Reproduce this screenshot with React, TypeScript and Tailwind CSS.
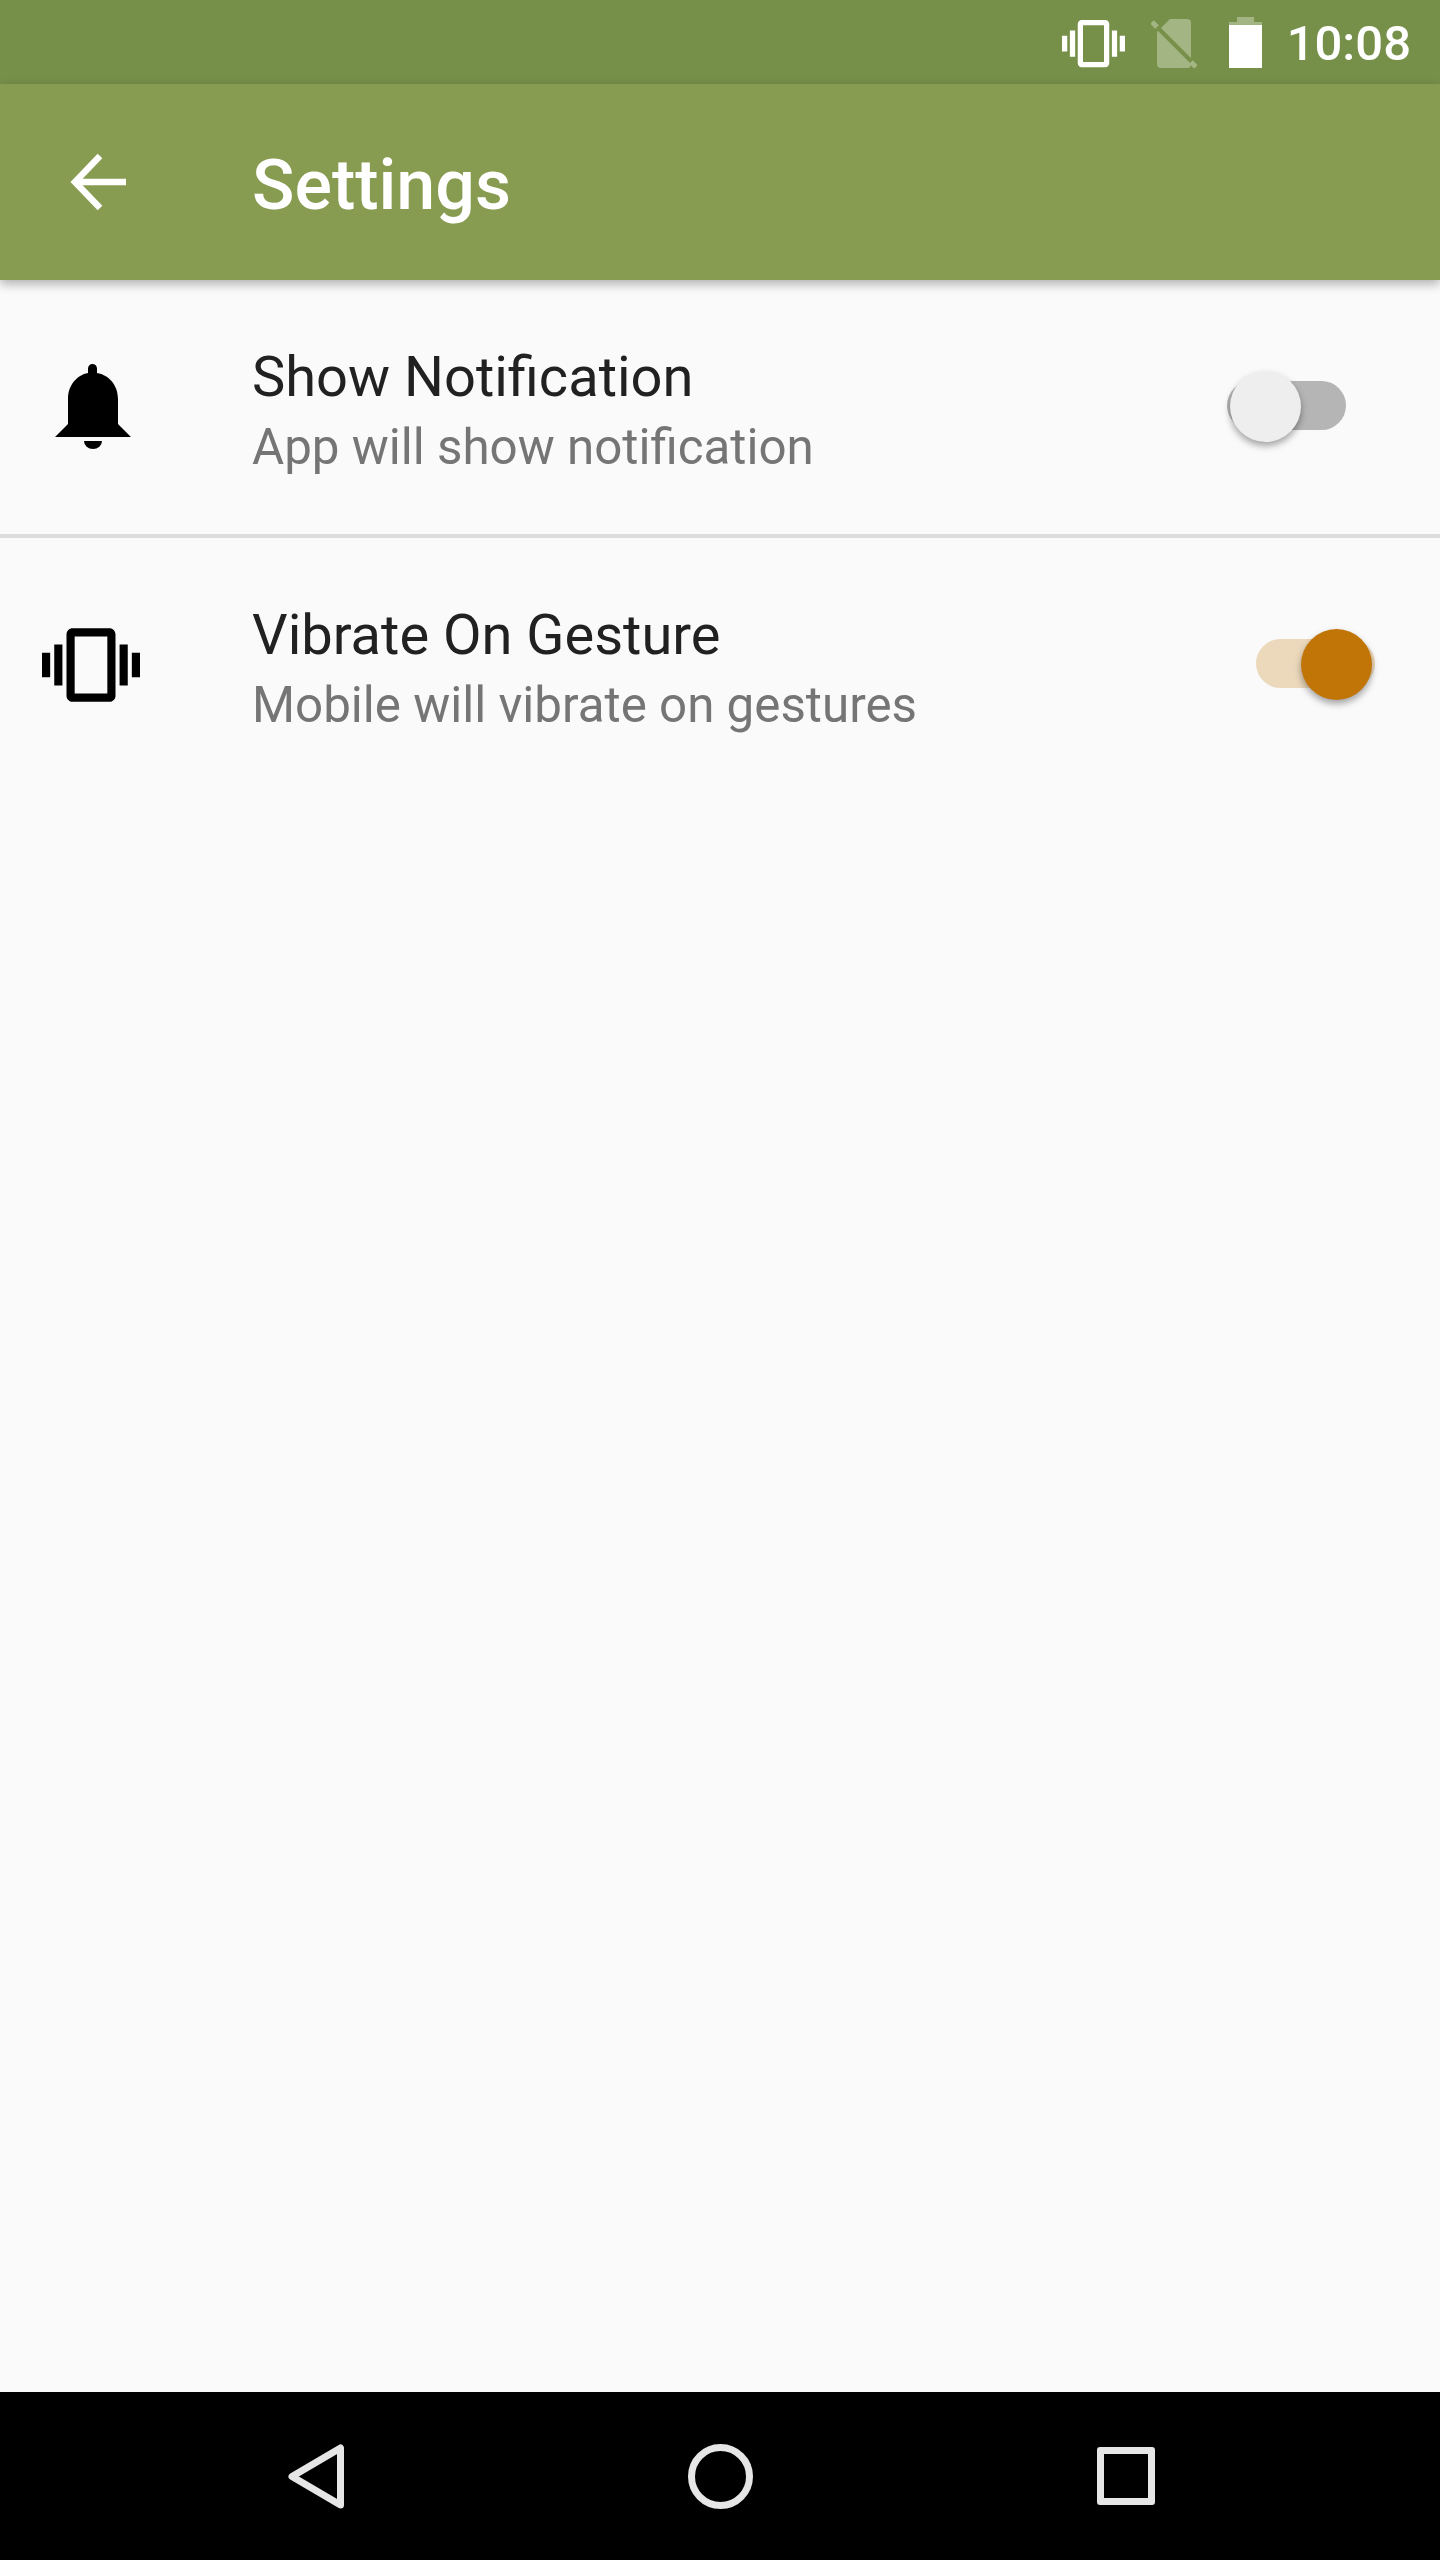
const font = { fontFamily: "Roboto, sans-serif" };

function VibrationIcon({ className }: { className: string }) {
  return (
    <svg viewBox="0 0 24 24" className={className} fill="currentColor">
      <path d="M0 15h2V9H0v6zm3 2h2V7H3v10zm19-8v6h2V9h-2zm-3 8h2V7h-2v10zM16.5 3h-9C6.67 3 6 3.67 6 4.5v15c0 .83.67 1.5 1.5 1.5h9c.83 0 1.5-.67 1.5-1.5v-15c0-.83-.67-1.5-1.5-1.5zM16 19H8V5h8v14z" />
    </svg>
  );
}

function NoSimIcon() {
  return (
    <svg viewBox="0 0 46 50" className="w-[46px] h-[50px] mr-[32px] mt-[1px]">
      <path
        d="M19 1h17a4 4 0 0 1 4 4v41a4 4 0 0 1-4 4H10a4 4 0 0 1-4-4V14z"
        fill="#a3b583"
      />
      <path d="M4 7 43 46" stroke="#76904a" strokeWidth="4" fill="none" />
      <path d="M1 4 6 9" stroke="#a3b583" strokeWidth="5" fill="none" />
      <path d="M40 44l5 5" stroke="#a3b583" strokeWidth="5" fill="none" />
    </svg>
  );
}

function BatteryIcon() {
  return (
    <div className="flex flex-col items-center w-[33px] mr-[25px]">
      <div className="w-[17px] h-[5px] bg-[#a3b583]" />
      <div className="w-[33px] h-[3px] bg-[#a3b583]" />
      <div className="w-[33px] h-[43px] bg-white" />
    </div>
  );
}

function BellIcon() {
  return (
    <svg viewBox="0 0 76 85" className="w-[76px] h-[85px]" fill="#000">
      <path d="M33 9V4.5a4.5 4.5 0 0 1 9 0V9c12 2 21 12 21 26v25l13 13H0l13-13V35c0-14 9-24 20-26z" />
      <path d="M29 77h18a9 8 0 0 1-18 0z" />
    </svg>
  );
}

function Toggle({ on }: { on: boolean }) {
  return (
    <div className={on ? "relative w-[119px] h-[49px] mr-[65px] mb-[4px]" : "relative w-[119px] h-[49px] mr-[94px] mb-[4px]"}>
      <div className={on ? "h-full rounded-full bg-[#ecd9bc]" : "h-full rounded-full bg-[#b5b5b5]"} />
      {on ? (
        <div className="absolute left-[45px] top-[-10px] w-[71px] h-[71px] rounded-full bg-[#c17507] shadow-[0_4px_7px_rgba(0,0,0,0.35)]" />
      ) : (
        <div className="absolute left-[3px] top-[-10px] w-[71px] h-[71px] rounded-full bg-[#eeeeee] shadow-[0_4px_7px_rgba(0,0,0,0.35)]" />
      )}
    </div>
  );
}

export default function App() {
  return (
    <div className="w-[1440px] h-[2560px] flex flex-col bg-[#fafafa] overflow-hidden" style={font}>
      {/* Status bar */}
      <div className="h-[84px] flex-shrink-0 bg-[#76904a] flex items-center justify-end text-white">
        <VibrationIcon className="w-[63px] h-[63px] mr-[26px] mt-[2px]" />
        <NoSimIcon />
        <BatteryIcon />
        <span className="text-[49px] leading-[84px] font-medium mr-[29px] pt-[3px]">10:08</span>
      </div>

      {/* Toolbar */}
      <div className="h-[196px] flex-shrink-0 bg-[#889c51] flex items-center shadow-[0_4px_10px_rgba(0,0,0,0.3)] relative">
        <svg viewBox="0 0 56 60" className="w-[56px] h-[60px] ml-[70px]" fill="none" stroke="#fff" strokeWidth="6.5">
          <path d="M56 30H5M30 4 5 30l25 26" />
        </svg>
        <span className="ml-[126px] pt-[6px] text-[70px] leading-[84px] font-medium text-white">Settings</span>
      </div>

      {/* Settings list */}
      <div className="flex-1">
        <div className="h-[258px] flex items-center border-b-[4px] border-[#dcdcdc]">
          <div className="w-[252px] pl-[55px] flex-shrink-0 mb-[2px]">
            <BellIcon />
          </div>
          <div className="flex-1 pt-[9px]">
            <div className="text-[56px] leading-[70px] text-[#212121]">Show Notification</div>
            <div className="text-[49.3px] leading-[70px] text-[#757575]">App will show notification</div>
          </div>
          <Toggle on={false} />
        </div>
        <div className="h-[254px] flex items-center">
          <div className="w-[252px] pl-[42px] flex-shrink-0">
            <VibrationIcon className="w-[98px] h-[98px] text-black" />
          </div>
          <div className="flex-1 pt-[9px]">
            <div className="text-[56px] leading-[70px] text-[#212121]">Vibrate On Gesture</div>
            <div className="text-[49.3px] leading-[70px] text-[#757575]">Mobile will vibrate on gestures</div>
          </div>
          <Toggle on={true} />
        </div>
      </div>

      {/* Navigation bar */}
      <div className="h-[168px] flex-shrink-0 bg-black flex items-center">
        <svg viewBox="0 0 56 65" className="w-[56px] h-[65px] ml-[288px]" fill="none" stroke="#e6e6e6" strokeWidth="7" strokeLinejoin="round">
          <path d="M52.5 4v57L4 32.5z" />
        </svg>
        <div className="w-[65px] h-[65px] rounded-full border-[7px] border-[#e6e6e6] ml-[344px]" />
        <div className="w-[58px] h-[58px] rounded-[3px] border-[7px] border-[#e6e6e6] ml-[344px]" />
      </div>
    </div>
  );
}
